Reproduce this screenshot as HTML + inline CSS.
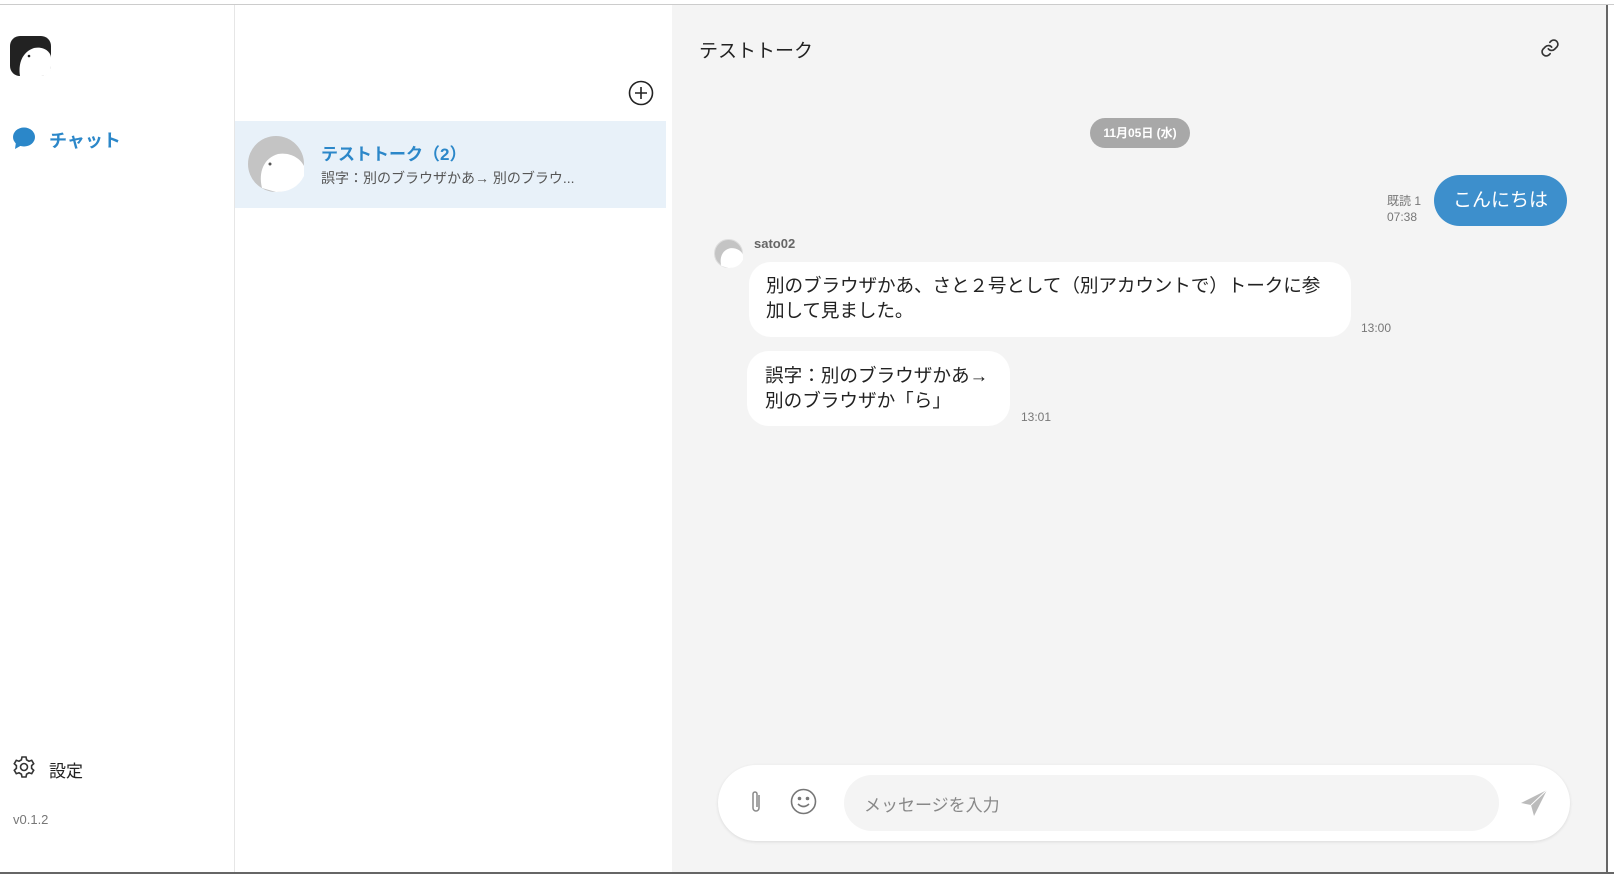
<!DOCTYPE html>
<html><head><meta charset="utf-8"><style>
*{box-sizing:border-box;margin:0;padding:0}
body{width:1614px;height:874px;position:relative;overflow:hidden;background:#fff;font-family:"Liberation Sans","Noto Sans CJK JP",sans-serif;color:#222}
.a{position:absolute;white-space:nowrap}
</style></head><body>
<div class="a" style="left:0;top:0;width:1614px;height:5px;border-bottom:1px solid #ccc;background:#fff"></div>
<div class="a" style="left:234px;top:5px;width:1px;height:869px;background:#e6e6e6"></div>
<div class="a" style="left:672px;top:5px;width:935px;height:868px;background:#f4f4f4"></div>
<div class="a" style="left:1606px;top:5px;width:2px;height:869px;background:#666"></div>
<div class="a" style="left:0;top:872px;width:1614px;height:2px;background:#666"></div>

<svg class="a" style="left:10px;top:36px" width="41" height="40" viewBox="0 0 41 40"><rect width="41" height="40" rx="10" fill="#222"/><path d="M10 40 C8 28 12 16 24 12 C34 10 41 16 41 22 L41 30 Q41 40 31 40Z" fill="#fff"/><circle cx="19" cy="20" r="1.3" fill="#222"/></svg>
<svg class="a" style="left:12px;top:127px" width="24" height="24" viewBox="0 0 24 24"><ellipse cx="12" cy="10" rx="11" ry="9.5" fill="#2b87c9"/><path d="M4 15 L3 22 L10 18Z" fill="#2b87c9"/></svg>
<div class="a" style="left:49px;top:127px;font-size:18px;font-weight:bold;color:#2b87c9">チャット</div>
<svg class="a" style="left:12px;top:755px" width="24" height="24" viewBox="0 0 24 24" fill="none" stroke="#333" stroke-width="1.6"><circle cx="12" cy="12" r="3.5"/><path d="M10 2h4l.6 2.8 2.4 1.4 2.7-.9 2 3.4-2.1 1.9v2.8l2.1 1.9-2 3.4-2.7-.9-2.4 1.4L14 22h-4l-.6-2.8-2.4-1.4-2.7.9-2-3.4 2.1-1.9v-2.8L2.3 8.7l2-3.4 2.7.9 2.4-1.4Z"/></svg>
<div class="a" style="left:49px;top:757px;font-size:17px;color:#222">設定</div>
<div class="a" style="left:13px;top:812px;font-size:13px;color:#777">v0.1.2</div>

<svg class="a" style="left:628px;top:80px" width="26" height="26" viewBox="0 0 26 26" fill="none" stroke="#222" stroke-width="1.6"><circle cx="13" cy="13" r="11.5"/><path d="M13 7v12M7 13h12"/></svg>
<div class="a" style="left:235px;top:121px;width:431px;height:87px;background:#e8f1f9"></div>
<svg class="a" style="left:248px;top:136px" width="56" height="56" viewBox="0 0 56 56"><circle cx="28" cy="28" r="28" fill="#c4c4c4"/><path d="M14 52 C10 36 16 22 30 18 C42 16 52 22 56 30 L56 40 Q48 56 28 56Z" fill="#fff"/><circle cx="22" cy="28" r="1.5" fill="#555"/></svg>
<div class="a" style="left:321px;top:140px;font-size:17px;font-weight:bold;color:#2b87c9">テストトーク（2）</div>
<div class="a" style="left:321px;top:168px;font-size:14px;color:#555">誤字：別のブラウザかあ→ 別のブラウ...</div>

<div class="a" style="left:699px;top:36px;font-size:19px;color:#222">テストトーク</div>
<svg class="a" style="left:1540px;top:38px" width="20" height="20" viewBox="0 0 24 24" fill="none" stroke="#333" stroke-width="2" stroke-linecap="round"><path d="M10 13a5 5 0 0 0 7.5.5l3-3a5 5 0 0 0-7-7l-1.7 1.7"/><path d="M14 11a5 5 0 0 0-7.5-.5l-3 3a5 5 0 0 0 7 7l1.7-1.7"/></svg>
<div class="a" style="left:1090px;top:118px;width:100px;height:30px;border-radius:15px;background:#a8a8a8;color:#fff;font-size:12px;font-weight:bold;text-align:center;line-height:30px">11月05日 (水)</div>

<div class="a" style="left:1387px;top:193px;font-size:12px;color:#777;line-height:16px">既読 1<br>07:38</div>
<div class="a" style="left:1434px;top:175px;width:133px;height:51px;border-radius:26px;background:#3d8fcc;color:#fff;font-size:19px;text-align:center;line-height:51px">こんにちは</div>

<svg class="a" style="left:714px;top:239px" width="29" height="29" viewBox="0 0 56 56"><circle cx="28" cy="28" r="27" fill="#c4c4c4" stroke="#ddd" stroke-width="2"/><path d="M14 52 C10 36 16 22 30 18 C42 16 52 22 56 30 L56 40 Q48 56 28 56Z" fill="#fff"/></svg>
<div class="a" style="left:754px;top:236px;font-size:13px;font-weight:bold;color:#666">sato02</div>
<div class="a" style="left:749px;top:262px;width:602px;height:75px;border-radius:22px;background:#fff;font-size:18.6px;line-height:25px;padding:11px 17px;white-space:normal;letter-spacing:-0.1px">別のブラウザかあ、さと２号として（別アカウントで）トークに参加して見ました。</div>
<div class="a" style="left:1361px;top:321px;font-size:12px;color:#777">13:00</div>
<div class="a" style="left:747px;top:351px;width:263px;height:75px;border-radius:22px;background:#fff;font-size:18.6px;line-height:25px;padding:12px 18px">誤字：別のブラウザかあ→<br>別のブラウザか「ら」</div>
<div class="a" style="left:1021px;top:410px;font-size:12px;color:#777">13:01</div>

<div class="a" style="left:718px;top:765px;width:852px;height:76px;border-radius:38px;background:#fff;box-shadow:0 1px 3px rgba(0,0,0,.1)"></div>
<div class="a" style="left:844px;top:775px;width:655px;height:56px;border-radius:28px;background:#f4f4f4"></div>
<div class="a" style="left:864px;top:791px;font-size:17px;color:#888">メッセージを入力</div>
<svg class="a" style="left:748px;top:789px" width="16" height="26" viewBox="0 0 16 26" fill="none" stroke="#888" stroke-width="1.5"><path d="M11 6v13a3 3 0 0 1-6 0V5a2 2 0 0 1 4 0v13"/></svg>
<svg class="a" style="left:790px;top:788px" width="27" height="27" viewBox="0 0 27 27" fill="none" stroke="#777" stroke-width="1.6"><circle cx="13.5" cy="13.5" r="12"/><circle cx="9.5" cy="10.5" r="1" fill="#777"/><circle cx="17.5" cy="10.5" r="1" fill="#777"/><path d="M8 16q5.5 5 11 0"/></svg>
<svg class="a" style="left:1520px;top:789px" width="28" height="28" viewBox="0 0 28 28"><path d="M27 1 L1 14 L11 16 L14 27Z" fill="#bbb"/><path d="M27 1 L11 16" stroke="#fff" stroke-width="1"/></svg>
</body></html>
